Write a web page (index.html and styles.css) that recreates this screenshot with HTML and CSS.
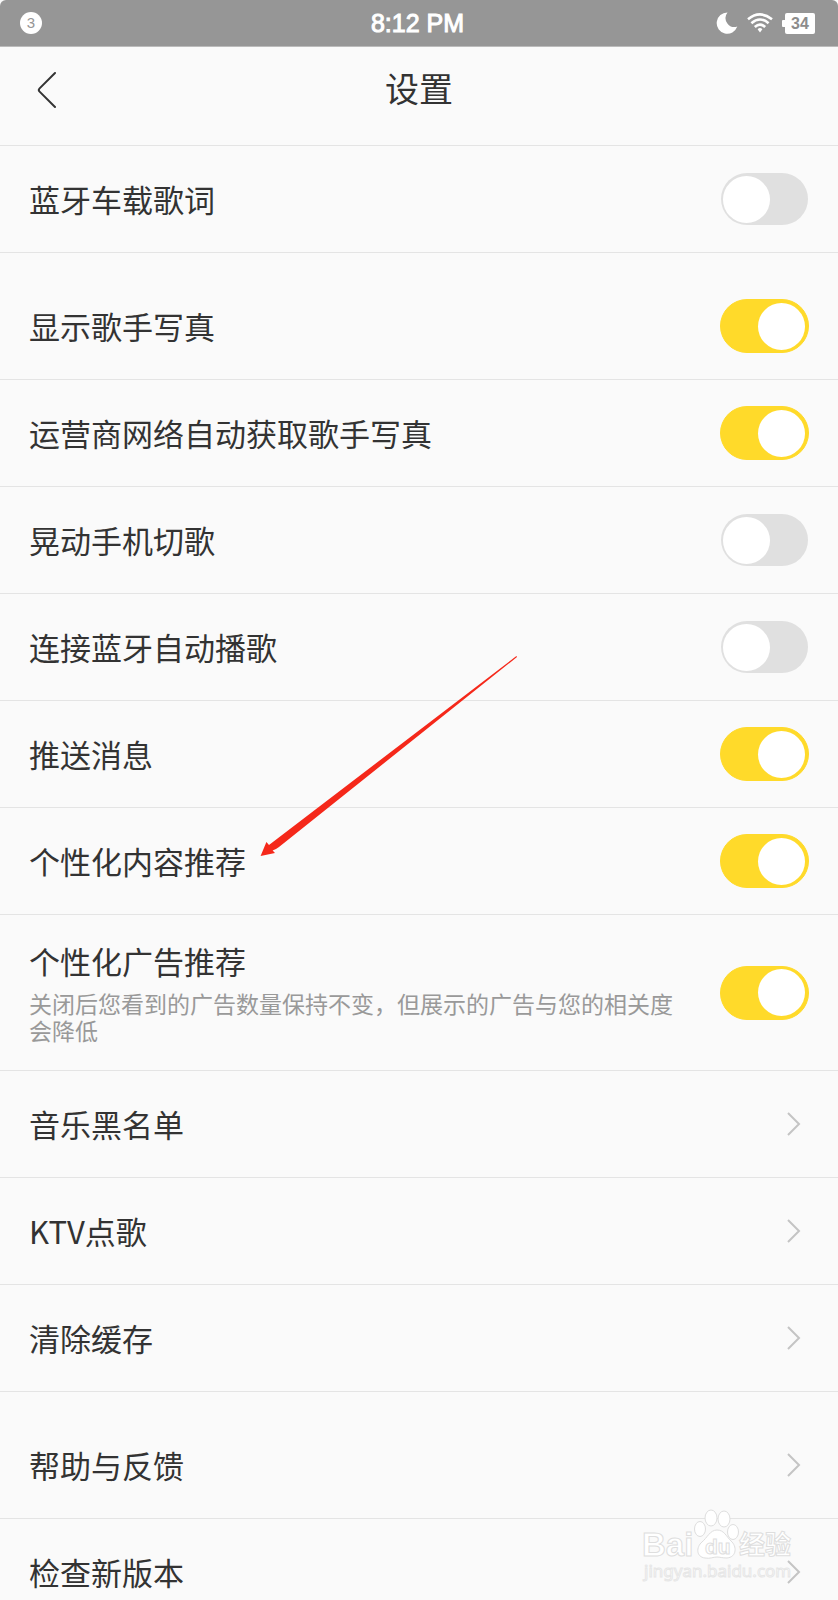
FILE: index.html
```html
<!DOCTYPE html>
<html lang="zh-CN">
<head>
    <meta charset="UTF-8">
    <meta name="viewport" content="width=device-width, initial-scale=1.0">
    <title>设置</title>
    <link rel="stylesheet" href="styles.css">
</head>
<body>
    <div class="screen">
        <div class="status-bar">
            <div class="status-left"><span class="badge">3</span></div>
            <div class="status-time">8:12 PM</div>
            <div class="status-icons">
                <svg class="moon" width="22" height="22" viewBox="0 0 22 22">
                    <path d="M11.5 0.5A10.6 10.6 0 1 0 21.3 14.6A9 9 0 0 1 11.5 0.5Z" fill="#fff"/>
                </svg>
                <svg class="wifi" width="26" height="20" viewBox="0 0 26 20" fill="none" stroke="#fff" stroke-width="2.6">
                    <path d="M1 6.2Q13 -3.4 25 6.2"/>
                    <path d="M4.4 10.2Q13 2.8 21.6 10.2"/>
                    <path d="M7.8 14Q13 9.2 18.2 14"/>
                    <path d="M10.6 16.2Q13 13.6 15.4 16.2L13 19.4Z" fill="#fff" stroke="none"/>
                </svg>
                <span class="battery">34</span>
            </div>
        </div>

        <header class="header">
            <button class="back" type="button" aria-label="返回">
                <svg width="20" height="38" viewBox="0 0 20 38" fill="none" stroke="#333" stroke-width="2" stroke-linecap="round" stroke-linejoin="round">
                    <path d="M18 2L2.6 17.4Q1 19 2.6 20.6L18 36"/>
                </svg>
            </button>
            <h1>设置</h1>
        </header>

        <main class="list">
            <section class="group">
                <label class="row">
                    <span class="row-title">蓝牙车载歌词</span>
                    <input class="toggle" type="checkbox">
                </label>
            </section>

            <section class="group">
                <label class="row">
                    <span class="row-title">显示歌手写真</span>
                    <input class="toggle" type="checkbox" checked>
                </label>
                <label class="row">
                    <span class="row-title">运营商网络自动获取歌手写真</span>
                    <input class="toggle" type="checkbox" checked>
                </label>
                <label class="row">
                    <span class="row-title">晃动手机切歌</span>
                    <input class="toggle" type="checkbox">
                </label>
                <label class="row">
                    <span class="row-title">连接蓝牙自动播歌</span>
                    <input class="toggle" type="checkbox">
                </label>
                <label class="row">
                    <span class="row-title">推送消息</span>
                    <input class="toggle" type="checkbox" checked>
                </label>
                <label class="row">
                    <span class="row-title">个性化内容推荐</span>
                    <input class="toggle" type="checkbox" checked>
                    <svg class="pointer" width="260" height="202" viewBox="0 0 260 202">
                        <path d="M256.4 1L9 190L6.4 187L0.6 201L15 198L12.6 195.6Q15 195 19 192L257 2Z" fill="#f5281a"/>
                    </svg>
                </label>
                <label class="row">
                    <span class="row-text">
                        <span class="row-title">个性化广告推荐</span>
                        <span class="row-desc">关闭后您看到的广告数量保持不变，但展示的广告与您的相关度会降低</span>
                    </span>
                    <input class="toggle" type="checkbox" checked>
                </label>
                <a class="row" href="#blacklist">
                    <span class="row-title">音乐黑名单</span>
                    <svg class="chevron" width="16" height="26" viewBox="0 0 16 26"><path d="M2 2L13 13L2 24"/></svg>
                </a>
                <a class="row" href="#ktv">
                    <span class="row-title">KTV点歌</span>
                    <svg class="chevron" width="16" height="26" viewBox="0 0 16 26"><path d="M2 2L13 13L2 24"/></svg>
                </a>
                <a class="row" href="#cache">
                    <span class="row-title">清除缓存</span>
                    <svg class="chevron" width="16" height="26" viewBox="0 0 16 26"><path d="M2 2L13 13L2 24"/></svg>
                </a>
            </section>

            <section class="group">
                <a class="row" href="#help">
                    <span class="row-title">帮助与反馈</span>
                    <svg class="chevron" width="16" height="26" viewBox="0 0 16 26"><path d="M2 2L13 13L2 24"/></svg>
                </a>
                <a class="row" href="#update">
                    <span class="row-title">检查新版本</span>
                    <svg class="chevron" width="16" height="26" viewBox="0 0 16 26"><path d="M2 2L13 13L2 24"/></svg>
                </a>
            </section>
        </main>

        <svg class="watermark" width="156" height="76" viewBox="0 0 156 76">
            <text class="wm-brand" x="2" y="48">Bai</text>
            <g class="wm-paw">
                <ellipse cx="60" cy="21" rx="5.5" ry="7.5"/>
                <ellipse cx="71" cy="10" rx="6" ry="8"/>
                <ellipse cx="84" cy="11" rx="6" ry="8"/>
                <ellipse cx="93" cy="24" rx="5.5" ry="7.5"/>
                <path d="M77 22C84 22 86 28 91 33C97 38 97 49 87 50C82 50 80 49 77 49C73 49 70 51 65 50C56 49 56 39 62 34C67 30 70 22 77 22Z"/>
            </g>
            <text class="wm-du" x="65" y="46">du</text>
            <text class="wm-cn" x="99" y="46">经验</text>
            <text class="wm-url" x="4" y="69">jingyan.baidu.com</text>
        </svg>
    </div>
</body>
</html>
```

FILE: styles.css
```css
/* Base Styles */
* {
    box-sizing: border-box;
    margin: 0;
    padding: 0;
}

body {
    font-family: "Noto Sans CJK SC", sans-serif;
    background: #fafafa;
    color: #333;
}

.screen {
    position: relative;
    display: flex;
    flex-direction: column;
    height: 100vh;
    overflow: hidden;
}

/* Status Bar */
.status-bar {
    display: grid;
    grid-template-columns: 1fr auto 1fr;
    align-items: center;
    flex: none;
    height: 47px;
    padding: 0 23px 0 20px;
    background: #969696;
    border-bottom: 1px solid #bbb;
    border-radius: 6px 6px 0 0;
    color: #fff;
    font-family: "Liberation Sans", Arial, sans-serif;
}

.badge {
    display: block;
    width: 22px;
    height: 22px;
    border-radius: 50%;
    background: #fff;
    color: #969696;
    font-size: 15px;
    line-height: 22px;
    text-align: center;
}

.status-time {
    font-size: 25px;
    -webkit-text-stroke: 1px #fff;
}

.status-icons {
    display: flex;
    align-items: center;
    justify-content: flex-end;
    gap: 9px;
}

.battery {
    position: relative;
    width: 30px;
    height: 21px;
    margin-left: 3px;
    border-radius: 2px;
    background: #fff;
    color: #8c8c8c;
    font-size: 16px;
    font-weight: bold;
    line-height: 21px;
    text-align: center;
}

.battery::before {
    content: "";
    position: absolute;
    left: -3px;
    top: 7px;
    width: 3px;
    height: 7px;
    border-radius: 1px 0 0 1px;
    background: #fff;
}

/* Header */
.header {
    display: grid;
    grid-template-columns: 1fr auto 1fr;
    align-items: start;
    flex: none;
    padding: 18px 30px 30px;
    border-bottom: 1px solid #e4e4e4;
}

.header h1 {
    font-size: 34px;
    font-weight: 400;
    line-height: 46px;
}

.back {
    display: flex;
    justify-self: start;
    padding: 6px 7px;
    border: none;
    background: none;
    cursor: pointer;
}

/* Settings List */
.list {
    flex: 1;
    min-height: 0;
    overflow-y: auto;
    scrollbar-width: none;
}

.group + .group {
    margin-top: 20px;
}

.row {
    position: relative;
    display: flex;
    align-items: center;
    justify-content: space-between;
    gap: 40px;
    min-height: 107px;
    padding: 26px 29px;
    border-bottom: 1px solid #e4e4e4;
    color: #333;
    text-decoration: none;
    cursor: pointer;
}

.row-text {
    display: flex;
    flex-direction: column;
    gap: 9px;
}

.row-title {
    font-size: 31px;
    line-height: 40px;
}

.row-desc {
    color: #999;
    font-size: 23px;
    line-height: 27px;
}

.chevron {
    flex: none;
    margin-right: 7px;
    fill: none;
    stroke: #c4c4c4;
    stroke-width: 2;
}

/* Toggle */
.toggle {
    appearance: none;
    display: flex;
    flex: none;
    align-items: center;
    width: 89px;
    height: 54px;
    padding: 0 3px 0 2px;
    border: 1px solid transparent;
    border-radius: 27px;
    background: #e0e0e0;
    background-clip: padding-box;
    cursor: pointer;
}

.toggle::before {
    content: "";
    width: 47px;
    height: 47px;
    border-radius: 50%;
    background: #fff;
}

.toggle:checked {
    justify-content: flex-end;
    border-color: #ffda2a;
    background: #ffda2a;
}

/* Arrow over the list */
.pointer {
    position: absolute;
    left: 260px;
    bottom: 57px;
    z-index: 1;
    pointer-events: none;
}

/* Watermark */
.watermark {
    position: absolute;
    right: 42px;
    bottom: 16px;
    fill: #fff;
    stroke: #dedede;
    stroke-width: 1;
    pointer-events: none;
}

.wm-brand,
.wm-du {
    font-family: "Liberation Sans", Arial, sans-serif;
    font-weight: bold;
}

.wm-brand {
    font-size: 33px;
}

.wm-du {
    font-size: 21px;
}

.wm-cn {
    font-size: 26px;
    font-weight: bold;
}

.wm-url {
    font-family: "Noto Sans", sans-serif;
    font-size: 17px;
    stroke: #e6e6e6;
}
```
